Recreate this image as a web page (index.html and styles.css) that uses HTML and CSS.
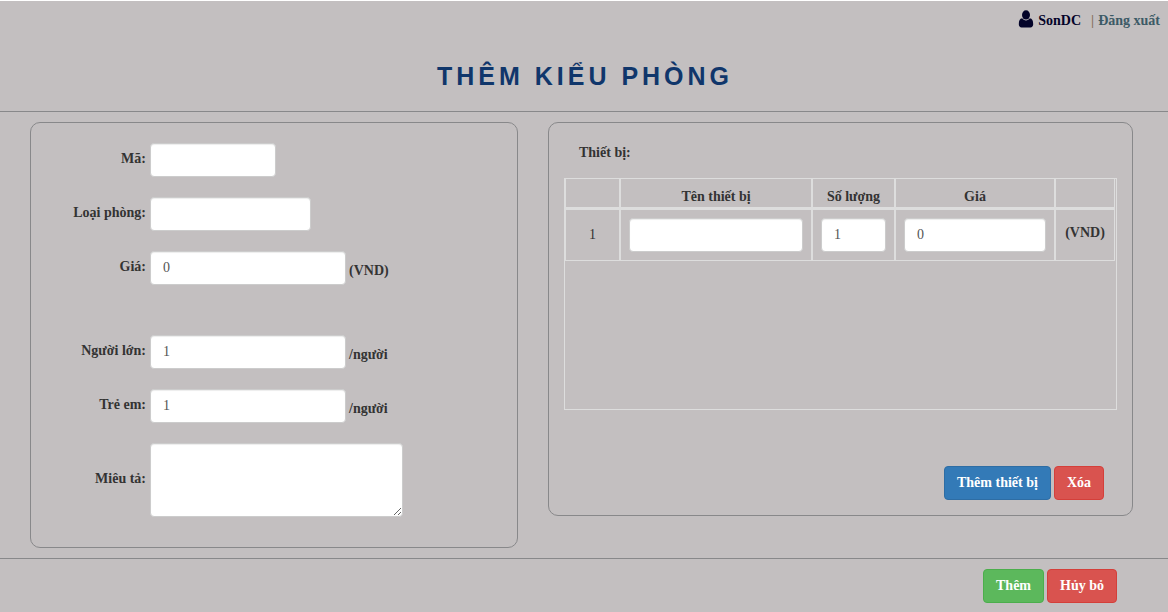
FILE: index.html
```html
<!DOCTYPE html>
<html lang="vi">
<head>
<meta charset="utf-8">
<meta name="viewport" content="width=device-width, initial-scale=1">
<title>Thêm kiểu phòng</title>
<link rel="stylesheet" href="styles.css">
</head>
<body>
<header class="topbar">
  <a class="user" href="#"><svg class="user-icon" viewBox="0 0 16 18" aria-hidden="true"><ellipse cx="8" cy="4.900" rx="4" ry="4.600"/><path d="M4.200 8.300C1.800 8.600 .8 10.600 .8 14.200C.8 16.200 1.900 17.400 3.600 17.400H12.400C14.100 17.400 15.200 16.200 15.200 14.200C15.200 10.600 14.200 8.600 11.800 8.300C10.800 9.700 9.500 10.400 8 10.400S5.200 9.700 4.200 8.300Z"/></svg>SonDC</a>
  <span class="divider">|</span>
  <a class="logout" href="#">Đăng xuất</a>
</header>
<h1 class="title">THÊM KIỂU PHÒNG</h1>
<form class="room-form">
  <main class="panels">
    <section class="panel details">
      <div class="row">
        <label class="label" for="code">Mã:</label>
        <input class="control code" id="code" type="text">
      </div>
      <div class="row">
        <label class="label" for="kind">Loại phòng:</label>
        <input class="control kind" id="kind" type="text">
      </div>
      <div class="row">
        <label class="label" for="price">Giá:</label>
        <input class="control amount" id="price" type="text" value="0">
        <span class="unit">(VND)</span>
      </div>
      <div class="row capacity">
        <label class="label" for="adults">Người lớn:</label>
        <input class="control amount" id="adults" type="text" value="1">
        <span class="unit">/người</span>
      </div>
      <div class="row">
        <label class="label" for="children">Trẻ em:</label>
        <input class="control amount" id="children" type="text" value="1">
        <span class="unit">/người</span>
      </div>
      <div class="row">
        <label class="label" for="description">Miêu tả:</label>
        <textarea class="control description" id="description"></textarea>
      </div>
    </section>
    <section class="panel devices">
      <h2 class="devices-title">Thiết bị:</h2>
      <div class="table-box">
        <table class="table">
          <colgroup><col class="col-index"><col><col class="col-count"><col class="col-price"><col class="col-unit"></colgroup>
          <thead>
            <tr><th></th><th>Tên thiết bị</th><th>Số lượng</th><th>Giá</th><th></th></tr>
          </thead>
          <tbody>
            <tr>
              <td>1</td>
              <td><input class="control" type="text" aria-label="Tên thiết bị"></td>
              <td><input class="control" type="text" value="1" aria-label="Số lượng"></td>
              <td><input class="control" type="text" value="0" aria-label="Giá"></td>
              <td class="currency">(VND)</td>
            </tr>
          </tbody>
        </table>
      </div>
      <div class="actions">
        <button class="button primary" type="button">Thêm thiết bị</button>
        <button class="button danger" type="button">Xóa</button>
      </div>
    </section>
  </main>
  <footer class="footer">
    <button class="button success" type="submit">Thêm</button>
    <button class="button danger" type="reset">Hủy bỏ</button>
  </footer>
</form>
</body>
</html>
```
FILE: styles.css
```css
* { box-sizing: border-box; }

body {
  margin: 0;
  border-top: 1px solid #fff;
  background: #c3bfc0;
  color: #333;
  font: 14px/20px "Liberation Serif", "Times New Roman", serif;
}

.topbar {
  display: flex;
  justify-content: flex-end;
  align-items: center;
  height: 40px;
  padding-right: 8px;
  font-weight: bold;
}
.user { display: flex; align-items: center; color: #030329; text-decoration: none; }
.user-icon { width: 16px; height: 18px; margin: 0 4px 4px 0; fill: currentColor; }
.divider { margin: 0 4px 0 10px; color: #87715f; }
.logout { color: #3c5a66; text-decoration: none; }

.title {
  margin: 0;
  padding: 20px 0 20px 2px;
  border-bottom: 1px solid #88888a;
  color: #10366b;
  font: bold 25px/30px "Liberation Sans", Arial, sans-serif;
  letter-spacing: 4px;
  text-align: center;
}

.panels {
  display: grid;
  grid-template-columns: 488fr 585fr;
  align-items: start;
  gap: 30px;
  padding: 10px 35px 10px 30px;
}
.panel { border: 1px solid #88888a; border-radius: 10px; }

.details { display: grid; gap: 20px; padding: 20px 16px 30px 0; }
.row { display: flex; align-items: center; }
.capacity { margin-top: 30px; }
.label {
  width: 115px;
  margin-right: 4px;
  padding-bottom: 2px;
  font-weight: bold;
  text-align: right;
}
.unit { padding: 6px 0 0 3px; font-weight: bold; }

.control {
  display: block;
  width: 100%;
  height: 34px;
  padding: 6px 12px;
  border: 1px solid #ccc;
  border-radius: 4px;
  background: #fff;
  box-shadow: inset 0 1px 1px rgba(0, 0, 0, .075);
  color: #555;
  font: inherit;
}
.code { width: 126px; }
.kind { width: 161px; }
.amount { width: 196px; }
.description { width: 253px; height: 74px; }

.devices { padding: 20px 15px 15px; }
.devices-title { margin: 0 0 15px 15px; font: inherit; font-weight: bold; }
.table-box { height: 232px; padding-right: 1px; border: 1px solid #ddd; overflow: auto; }
.table { width: 100%; table-layout: fixed; border-spacing: 0; text-align: center; }
.col-index { width: 55px; }
.col-count { width: 83px; }
.col-price { width: 160px; }
.col-unit { width: 60px; }
.table th { height: 30px; padding: 8px 0 0; border: solid #ddd; border-width: 0 1px 2px; }
.table td { padding: 8px; border: 1px solid #ddd; }
.table .currency { padding: 0 0 4px; font-weight: bold; }

.actions { display: flex; justify-content: flex-end; gap: 3px; margin-top: 56px; padding-right: 13px; }
.button {
  height: 34px;
  padding: 6px 12px;
  border: 1px solid;
  border-radius: 4px;
  color: #fff;
  font: inherit;
  font-weight: bold;
  white-space: nowrap;
}
.primary { border-color: #2e6da4; background: #337ab7; }
.danger { border-color: #d43f3a; background: #d9534f; }
.success { border-color: #4cae4c; background: #5cb85c; }

.footer {
  display: flex;
  justify-content: flex-end;
  gap: 3px;
  padding: 10px 51px 9px 0;
  border-top: 1px solid #88888a;
}
```
